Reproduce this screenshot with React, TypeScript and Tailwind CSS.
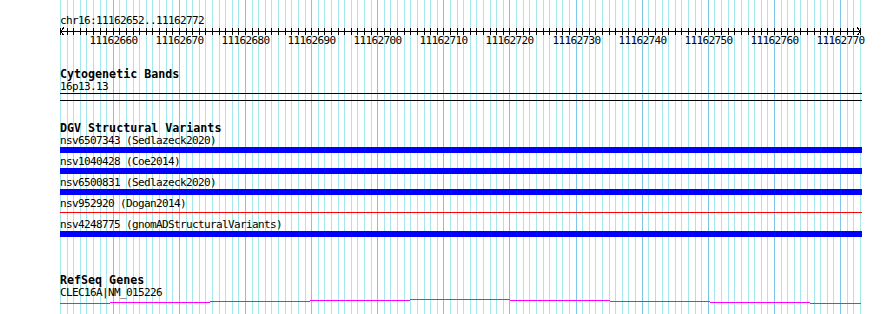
const START = 11162652;
const BP_COUNT = 122;
const xs = Array.from({ length: BP_COUNT }, (_, i) => Math.floor(60.4 + 6.6116 * i) + 0.5);

type Variant = { id: string; source: string; kind: 'bar' | 'line' };

const variants: Variant[] = [
  { id: 'nsv6507343', source: 'Sedlazeck2020', kind: 'bar' },
  { id: 'nsv1040428', source: 'Coe2014', kind: 'bar' },
  { id: 'nsv6500831', source: 'Sedlazeck2020', kind: 'bar' },
  { id: 'nsv952920', source: 'Dogan2014', kind: 'line' },
  { id: 'nsv4248775', source: 'gnomADStructuralVariants', kind: 'bar' },
];

// intron connector, drawn as stepped segments like the original raster
const geneSteps: [number, number, number][] = [
  [60, 110, 5],
  [110, 210, 4],
  [210, 310, 3],
  [310, 410, 2],
  [410, 510, 1],
  [510, 610, 2],
  [610, 710, 3],
  [710, 810, 4],
  [810, 861, 5],
];

function GridBackground() {
  return (
    <svg className="absolute inset-0" width={890} height={314} shapeRendering="crispEdges">
      {xs.map((x, i) => (
        <line
          key={i}
          x1={x}
          x2={x}
          y1={0}
          y2={314}
          stroke={(START + i) % 10 === 0 ? '#7cc6ea' : '#a4e8ee'}
          strokeWidth={1}
        />
      ))}
    </svg>
  );
}

function Ruler() {
  return (
    <>
      <svg className="block" width={890} height={9} shapeRendering="crispEdges">
        <line x1={60} x2={861} y1={5.5} y2={5.5} stroke="#000" />
        {xs.map((x, i) => (
          <line key={i} x1={x} x2={x} y1={2} y2={9} stroke="#000" />
        ))}
        <polyline points="64,1.5 60.5,5.5 64,9.5" fill="none" stroke="#000" />
        <polyline points="857,1.5 860.5,5.5 857,9.5" fill="none" stroke="#000" />
      </svg>
      <div className="relative mt-px h-[10px] w-[890px] text-[11px] leading-[10px] tracking-[-0.62px]">
        {xs.map((x, i) =>
          (START + i) % 10 === 0 ? (
            <span key={i} className="absolute top-0 whitespace-pre" style={{ left: x - 24 }}>
              {START + i}
            </span>
          ) : null,
        )}
      </div>
    </>
  );
}

function TrackTitle({ children, className }: { children: string; className: string }) {
  return (
    <div className={`ml-[60px] h-[12px] text-[11.67px] leading-[12px] font-bold ${className}`}>
      {children}
    </div>
  );
}

function Label({ children, className = '' }: { children: string; className?: string }) {
  return (
    <div className={`ml-[60px] h-[10px] whitespace-pre text-[11px] leading-[10px] tracking-[-0.62px] ${className}`}>
      {children}
    </div>
  );
}

export default function App() {
  return (
    <div className="relative h-[314px] w-[890px] overflow-hidden bg-white font-['DejaVu_Sans_Mono',monospace] text-black">
      <GridBackground />
      <div className="relative flex flex-col pt-[16px]">
        <Label>chr16:11162652..11162772</Label>
        <Ruler />

        <TrackTitle className="mt-[22px]">Cytogenetic Bands</TrackTitle>
        <Label className="mt-[2px]">16p13.13</Label>
        <div className="mt-px ml-[60px] h-px w-[802px] bg-black" />
        <div className="mt-[6px] ml-[60px] h-px w-[802px] bg-black" />

        <TrackTitle className="mt-[21px]">DGV Structural Variants</TrackTitle>
        <div className="mt-[2px] flex flex-col">
          {variants.map((v) => (
            <div key={v.id} className="flex flex-col pb-[4px]">
              <Label>{`${v.id} (${v.source})`}</Label>
              <div className="mt-px ml-[60px] h-[6px] w-[802px]">
                {v.kind === 'bar' ? (
                  <div className="h-[6px] w-full bg-[#0000ff]" />
                ) : (
                  <div className="mt-[2px] h-px w-full bg-[#ff0000]" />
                )}
              </div>
            </div>
          ))}
        </div>

        <TrackTitle className="mt-[33px]">RefSeq Genes</TrackTitle>
        <Label className="mt-[2px]">CLEC16A|NM_015226</Label>
        <svg className="block" width={890} height={7} shapeRendering="crispEdges">
          {geneSteps.map(([x1, x2, y]) => (
            <rect key={x1} x={x1} y={y} width={x2 - x1} height={1} fill="#ff00ff" />
          ))}
        </svg>
      </div>
    </div>
  );
}
